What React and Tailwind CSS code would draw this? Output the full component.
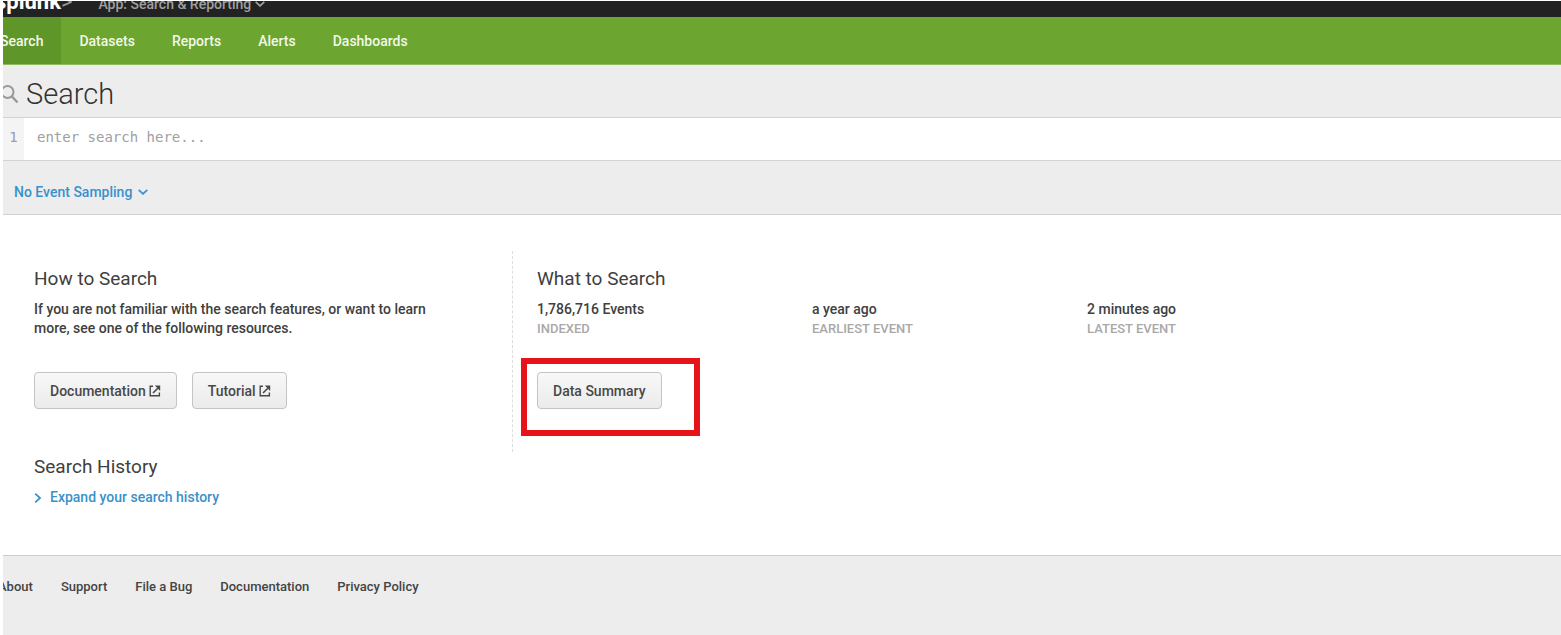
import { useState } from "react";

const navItems = ["Datasets", "Reports", "Alerts", "Dashboards"];
const footerItems = ["Support", "File a Bug", "Documentation", "Privacy Policy"];
const stats = [
  { value: "1,786,716 Events", label: "INDEXED" },
  { value: "a year ago", label: "EARLIEST EVENT" },
  { value: "2 minutes ago", label: "LATEST EVENT" },
];

function Chevron({ className }) {
  return (
    <svg viewBox="0 0 10 6" className={className} fill="none" stroke="currentColor" strokeWidth="1.7" aria-hidden="true">
      <path d="M0.7 0.8 L5 4.9 L9.3 0.8" />
    </svg>
  );
}

function ExternalIcon() {
  return (
    <svg viewBox="0 0 12 12" className="h-3 w-3" fill="none" stroke="currentColor" strokeWidth="1.4" aria-hidden="true">
      <path d="M4 1.2 H1.2 V10.8 H10.4 V7.6" />
      <path d="M4 8 L8.8 3.2" strokeWidth="1.6" />
      <path d="M5.8 0.6 H11.2 V6 Z" fill="currentColor" stroke="none" />
    </svg>
  );
}

const buttonClass =
  "flex h-[37px] items-center gap-[3px] rounded-[4px] border border-[#c4c4c4] bg-linear-to-b from-[#f8f8f8] to-[#ebebeb] px-[15px] text-sm font-medium text-[#484848]";

export default function App() {
  const [query, setQuery] = useState("");

  return (
    <div className="min-h-screen bg-white pt-px pl-[3px] font-['Roboto',sans-serif] text-[#404040]">
      <div className="flex min-h-[calc(100vh-1px)] flex-col overflow-hidden">
        <header>
          <div className="flex h-4 items-end overflow-hidden bg-[#222] pb-px">
            <div className="-ml-2 flex items-baseline gap-[26px]">
              <a href="#home" className="text-[22px] leading-6 font-bold text-white">
                splunk<span className="font-normal text-[#999]">&gt;</span>
              </a>
              <button type="button" className="flex items-center gap-1 text-sm leading-6 font-medium text-[#a0a0a0]">
                App: Search &amp; Reporting
                <Chevron className="h-1.5 w-2.5" />
              </button>
            </div>
          </div>
          <nav className="flex h-12 border-b border-[#8fba5f] bg-[#6ca52f] text-sm font-medium text-[#f2f7ea]">
            <a href="#search" className="-ml-[3px] flex items-center bg-[#5f962a] pr-[18px]">Search</a>
            <div className="flex gap-[37px] pl-[18px]">
              {navItems.map((item) => (
                <a key={item} href={`#${item.toLowerCase()}`} className="flex items-center">{item}</a>
              ))}
            </div>
          </nav>
        </header>

        <section className="bg-[#ededed]">
          <div className="flex h-[52px] items-center gap-[7px] pt-1.5">
            <svg viewBox="0 0 20 20" className="-ml-1 h-5 w-5 text-[#999]" fill="none" stroke="currentColor" strokeWidth="2" aria-hidden="true">
              <circle cx="8.5" cy="8" r="6" />
              <path d="M13 12.5 L18.5 18.5" strokeWidth="2.4" />
            </svg>
            <h1 className="text-[29px] leading-9 font-light text-[#333]">Search</h1>
          </div>
          <div className="flex h-11 border-y border-[#d2d2d2] bg-white font-['DejaVu_Sans_Mono',monospace] text-sm">
            <span className="flex w-[21px] items-center justify-center bg-[#f4f4f4] pb-1 text-sm text-[#9a9ab8]">1</span>
            <input
              aria-label="Search query"
              value={query}
              onChange={(e) => setQuery(e.target.value)}
              placeholder="enter search here..."
              className="min-w-0 flex-1 pb-1 pl-[13px] outline-none placeholder:text-[#a0a0a0]"
            />
          </div>
          <div className="flex h-[54px] items-center border-b border-[#d2d2d2] pt-2 pl-[11px]">
            <button type="button" className="flex items-center gap-1.5 text-sm font-medium text-[#3a91cb]">
              No Event Sampling
              <Chevron className="h-1.5 w-2.5" />
            </button>
          </div>
        </section>

        <main className="flex-1 px-[31px] pt-9 pb-[45px]">
          <div className="flex">
            <section className="h-[201px] w-[479px] shrink-0 border-r border-dashed border-[#ddd] pt-4">
              <h2 className="text-[19px] leading-6">How to Search</h2>
              <p className="mt-[9px] max-w-[410px] text-sm leading-[19px] font-medium">
                If you are not familiar with the search features, or want to learn more, see one of the following resources.
              </p>
              <div className="mt-[34px] flex gap-[15px]">
                <button type="button" className={buttonClass}>Documentation<ExternalIcon /></button>
                <button type="button" className={buttonClass}>Tutorial<ExternalIcon /></button>
              </div>
            </section>
            <section className="min-w-0 flex-1 pt-4 pl-6">
              <h2 className="text-[19px] leading-6">What to Search</h2>
              <dl className="mt-[9px] flex text-sm leading-[19px] font-medium">
                {stats.map((s) => (
                  <div key={s.label} className="flex w-[275px] flex-col-reverse">
                    <dt className="text-[13px] leading-[19px] text-[#a8a8a8]">{s.label}</dt>
                    <dd>{s.value}</dd>
                  </div>
                ))}
              </dl>
              <div className="mt-5 -ml-4 flex h-[78px] w-[179px] border-6 border-[#e6131a] pt-2 pl-2.5">
                <button type="button" className={buttonClass}>Data Summary</button>
              </div>
            </section>
          </div>
          <section className="mt-[3px]">
            <h2 className="text-[19px] leading-6">Search History</h2>
            <button type="button" className="mt-[9px] flex items-center gap-2 text-sm leading-[19px] font-medium text-[#3a91cb]">
              <svg viewBox="0 0 8 10" className="h-2.5 w-2" fill="none" stroke="currentColor" strokeWidth="1.8" aria-hidden="true">
                <path d="M1.2 0.7 L6 5 L1.2 9.3" />
              </svg>
              Expand your search history
            </button>
          </section>
        </main>

        <footer className="h-20 border-t border-[#ccc] bg-[#ededed] pt-[23px] text-[13px] leading-4 font-medium text-[#444]">
          <div className="flex gap-7">
            <a href="#about" className="-ml-[5px]">About</a>
            {footerItems.map((item) => (
              <a key={item} href={`#${item.toLowerCase().replaceAll(" ", "-")}`}>{item}</a>
            ))}
          </div>
        </footer>
      </div>
    </div>
  );
}
